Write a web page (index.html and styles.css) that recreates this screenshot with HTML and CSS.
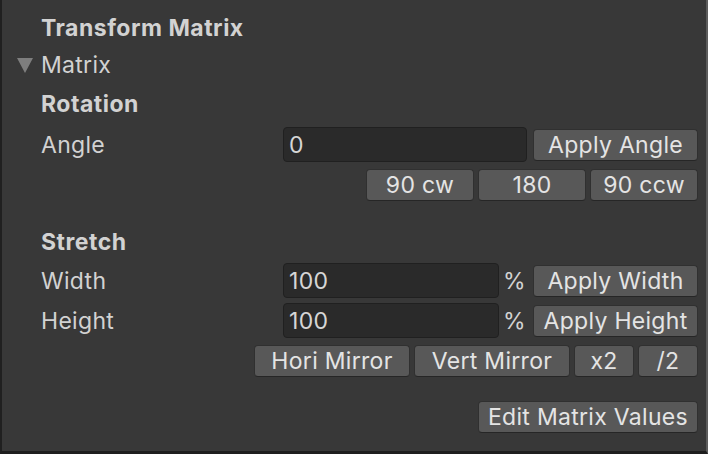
FILE: index.html
```html
<!DOCTYPE html>
<html>
<head>
<meta charset="utf-8">
<link rel="stylesheet" href="styles.css">
</head>
<body>
<div class="panel">
  <div class="row title">Transform Matrix</div>
  <div class="row foldout"><span class="tri"></span>Matrix</div>
  <div class="row heading rotation">Rotation</div>
  <div class="row field angle">
    <span class="label">Angle</span>
    <div class="input wide">0</div>
    <button class="btn apply">Apply Angle</button>
  </div>
  <div class="row btnrow rot">
    <button class="btn b108">90 cw</button>
    <button class="btn b108">180</button>
    <button class="btn b108">90 ccw</button>
  </div>
  <div class="row heading stretch">Stretch</div>
  <div class="row field width">
    <span class="label">Width</span>
    <div class="input narrow">100</div>
    <span class="pct">%</span>
    <button class="btn apply">Apply Width</button>
  </div>
  <div class="row field height">
    <span class="label">Height</span>
    <div class="input narrow">100</div>
    <span class="pct">%</span>
    <button class="btn apply">Apply Height</button>
  </div>
  <div class="row btnrow mirror">
    <button class="btn hori">Hori Mirror</button>
    <button class="btn vert">Vert Mirror</button>
    <button class="btn small">x2</button>
    <button class="btn small">/2</button>
  </div>
  <div class="row btnrow edit">
    <button class="btn editbtn">Edit Matrix Values</button>
  </div>
</div>
</body>
</html>
```
FILE: styles.css
```css
* { box-sizing: border-box; }
html, body { margin: 0; padding: 0; background: #383838; }
body {
  font-family: Inter, "Noto Sans", sans-serif;
  font-size: 23px;
  letter-spacing: 0.3px;
  color: #d2d2d2;
}
.panel {
  width: 708px;
  height: 454px;
  background: #383838;
  border-left: 2px solid #202020;
  border-right: 2px solid #5c5c5c;
  border-bottom: 3px solid #1e1e1e;
  padding: 10px 8px 0 39px;
  display: flex;
  flex-direction: column;
}
.row {
  display: flex;
  align-items: center;
}
.title {
  height: 36px;
  font-weight: 700;
  letter-spacing: 0.5px;
}
.foldout {
  height: 36px;
  margin-top: 1px;
  position: relative;
}
.tri {
  position: absolute;
  left: -24px;
  top: 11px;
  width: 0;
  height: 0;
  border-left: 8.5px solid transparent;
  border-right: 8.5px solid transparent;
  border-top: 15px solid #7e7e7e;
}
.heading {
  height: 36px;
  font-weight: 700;
  letter-spacing: 0.5px;
}
.rotation { margin-top: 3px; }
.stretch { margin-top: 23px; }
.field {
  height: 35px;
}
.angle { margin-top: 5px; }
.width { margin-top: 3px; }
.height { margin-top: 5px; }
.label {
  width: 242px;
  flex: none;
}
.input {
  height: 35px;
  background: #2a2a2a;
  border: 1px solid #202020;
  border-radius: 4px;
  padding-left: 5px;
  display: flex;
  align-items: center;
  color: #d6d6d6;
  flex: none;
}
.input.wide { width: 244px; margin-right: 6px; }
.input.narrow { width: 216px; }
.pct {
  width: 34px;
  padding-left: 4px;
  flex: none;
}
.btn {
  font-family: inherit;
  font-size: 23px;
  letter-spacing: 0.3px;
  color: #e4e4e4;
  background: #585858;
  border: 1px solid #303030;
  border-bottom-color: #262626;
  border-radius: 4px;
  height: 32px;
  padding: 0;
  margin: 0;
  display: flex;
  align-items: center;
  justify-content: center;
  flex: none;
}
.apply { width: 165px; }
.btnrow {
  justify-content: flex-end;
  gap: 4px;
  height: 32px;
}
.rot { margin-top: 7px; }
.b108 { width: 108px; }
.mirror { margin-top: 7px; }
.hori { width: 156px; }
.vert { width: 156px; }
.small { width: 60px; }
.edit { margin-top: 24px; }
.editbtn { width: 220px; }
```
